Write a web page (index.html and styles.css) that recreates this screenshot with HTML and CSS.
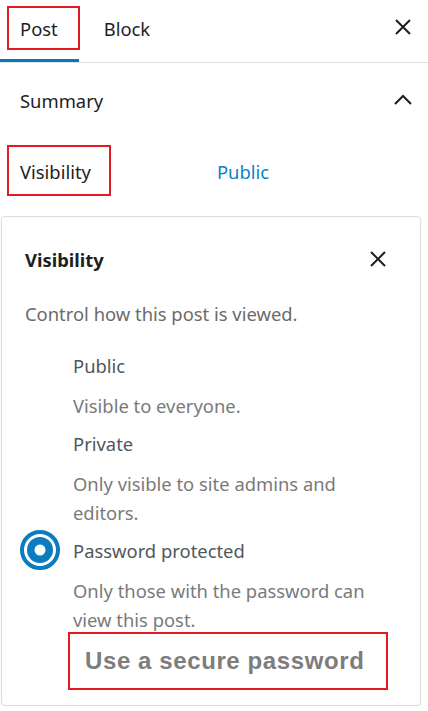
FILE: index.html
```html
<!DOCTYPE html>
<html lang="en">
<head>
    <meta charset="UTF-8">
    <meta name="viewport" content="width=device-width, initial-scale=1.0">
    <title>Post settings</title>
    <link rel="stylesheet" href="styles.css">
</head>
<body>
    <div class="tabs">
        <div class="tab active"><span class="mark mark-post">Post</span></div>
        <div class="tab">Block</div>
        <button class="icon-btn tab-close" aria-label="Close settings">
            <svg width="24" height="24" viewBox="0 0 24 24"><path d="M5 5L19 19M19 5L5 19" stroke="#1e1e1e" stroke-width="2" fill="none"/></svg>
        </button>
    </div>

    <div class="summary">
        <span>Summary</span>
        <svg width="24" height="24" viewBox="0 0 24 24"><path d="M4 16L12 8L20 16" stroke="#1e1e1e" stroke-width="2" fill="none"/></svg>
    </div>

    <div class="visibility-row">
        <span class="mark mark-vis">Visibility</span>
        <span class="vis-value">Public</span>
    </div>

    <div class="popover">
        <div class="popover-head">
            <h2>Visibility</h2>
            <button class="icon-btn" aria-label="Close">
                <svg width="24" height="24" viewBox="0 0 24 24"><path d="M5 5L19 19M19 5L5 19" stroke="#1e1e1e" stroke-width="2" fill="none"/></svg>
            </button>
        </div>
        <p class="intro">Control how this post is viewed.</p>

        <div class="options">
            <div class="option">
                <span class="radio"></span>
                <span class="label">Public</span>
                <span class="desc">Visible to everyone.</span>
            </div>
            <div class="option">
                <span class="radio"></span>
                <span class="label">Private</span>
                <span class="desc">Only visible to site admins and editors.</span>
            </div>
            <div class="option">
                <span class="radio checked">
                    <svg width="40" height="40" viewBox="0 0 40 40">
                        <circle cx="20" cy="20" r="18" fill="none" stroke="#0a7cbf" stroke-width="4"/>
                        <circle cx="20" cy="20" r="13" fill="#0a7cbf"/>
                        <circle cx="20" cy="20" r="5.5" fill="#fff"/>
                    </svg>
                </span>
                <span class="label">Password protected</span>
                <span class="desc">Only those with the password can view this post.</span>
            </div>
        </div>

        <div class="secure">Use a secure password</div>
    </div>
</body>
</html>
```

FILE: styles.css
```css
body {
    margin: 0;
    font-family: "Noto Sans", "Open Sans", sans-serif;
    font-size: 18.4px;
    color: #1e1e1e;
    background: #fff;
    width: 428px;
}
.icon-btn {
    border: none;
    background: none;
    padding: 0;
    width: 24px;
    height: 24px;
    cursor: pointer;
}
.icon-btn svg {
    display: block;
}
.mark {
    position: relative;
}
.mark::after {
    content: "";
    position: absolute;
    border: 2px solid #e31b23;
}
.mark-post::after {
    left: -13px;
    right: -22px;
    top: -10px;
    bottom: -9px;
}
.mark-vis::after {
    left: -13px;
    right: -20px;
    top: -14px;
    bottom: -12px;
}

/* tabs */
.tabs {
    display: flex;
    align-items: stretch;
    gap: 5px;
    height: 62px;
    border-bottom: 1px solid #e0e0e0;
}
.tab {
    display: flex;
    align-items: center;
    padding: 0 21px 6px 20px;
}
.tab.active {
    box-shadow: inset 0 -3px 0 #007cba;
}
.tab-close {
    margin: 15px 13px 0 auto;
}

/* summary */
.summary {
    display: flex;
    justify-content: space-between;
    align-items: center;
    height: 74px;
    padding: 0 13px 0 20px;
}
.visibility-row {
    display: flex;
    align-items: center;
    height: 68px;
    padding-left: 20px;
}
.vis-value {
    color: #0b82c4;
    margin-left: 126px;
}

/* popover */
.popover {
    margin: 11px 7px 0 1px;
    border: 1px solid #dcdcdc;
    border-radius: 4px;
    box-shadow: 0 1px 2px rgba(0, 0, 0, 0.05);
    padding: 0 30px 15px 23px;
}
.popover-head {
    display: flex;
    justify-content: space-between;
    align-items: center;
    height: 84px;
}
.popover-head h2 {
    margin: 0;
    font-size: 18.4px;
    font-weight: bold;
}
.intro {
    margin: 0;
    line-height: 26px;
    color: #6b6b6b;
}
.options {
    margin: 24px 0 0 -5px;
}
.option {
    display: grid;
    grid-template-columns: 53px 1fr;
    margin-bottom: 9px;
}
.radio {
    grid-row: 1;
    width: 40px;
    height: 40px;
    margin: -6px 0;
}
.radio svg {
    display: block;
}
.label {
    grid-column: 2;
    grid-row: 1;
    line-height: 29px;
    color: #50575e;
}
.desc {
    grid-column: 2;
    line-height: 29px;
    margin-top: 11px;
    color: #7a7a7a;
}
.secure {
    display: flex;
    align-items: center;
    box-sizing: border-box;
    width: 320px;
    height: 58px;
    margin: -11px 0 0 43px;
    padding-left: 15px;
    border: 2px solid #e31b23;
    font-family: "Liberation Sans", Arial, sans-serif;
    font-size: 24px;
    font-weight: bold;
    letter-spacing: 0.6px;
    color: #7d7d7d;
}
```
